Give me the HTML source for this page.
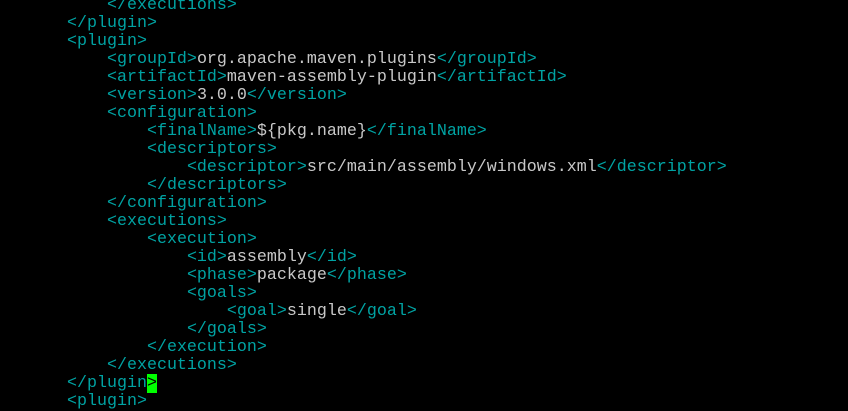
<!DOCTYPE html>
<html><head><meta charset="utf-8"><style>
html,body{margin:0;padding:0;background:#000;width:848px;height:406px;overflow:hidden}
pre{margin:0;position:absolute;left:27px;top:-3px;font-family:"Liberation Mono",monospace;font-size:16.67px;line-height:18px;color:#c8c8c8;letter-spacing:0}
.t{color:#00a3a3}
.c{background:#00ff00;color:#000}
</style></head><body>
<pre>        <span class="t">&lt;/executions&gt;</span>
<span class="t">    &lt;/plugin&gt;</span>
<span class="t">    &lt;plugin&gt;</span>
        <span class="t">&lt;groupId&gt;</span>org.apache.maven.plugins<span class="t">&lt;/groupId&gt;</span>
        <span class="t">&lt;artifactId&gt;</span>maven-assembly-plugin<span class="t">&lt;/artifactId&gt;</span>
        <span class="t">&lt;version&gt;</span>3.0.0<span class="t">&lt;/version&gt;</span>
        <span class="t">&lt;configuration&gt;</span>
            <span class="t">&lt;finalName&gt;</span>${pkg.name}<span class="t">&lt;/finalName&gt;</span>
            <span class="t">&lt;descriptors&gt;</span>
                <span class="t">&lt;descriptor&gt;</span>src/main/assembly/windows.xml<span class="t">&lt;/descriptor&gt;</span>
            <span class="t">&lt;/descriptors&gt;</span>
        <span class="t">&lt;/configuration&gt;</span>
        <span class="t">&lt;executions&gt;</span>
            <span class="t">&lt;execution&gt;</span>
                <span class="t">&lt;id&gt;</span>assembly<span class="t">&lt;/id&gt;</span>
                <span class="t">&lt;phase&gt;</span>package<span class="t">&lt;/phase&gt;</span>
                <span class="t">&lt;goals&gt;</span>
                    <span class="t">&lt;goal&gt;</span>single<span class="t">&lt;/goal&gt;</span>
                <span class="t">&lt;/goals&gt;</span>
            <span class="t">&lt;/execution&gt;</span>
        <span class="t">&lt;/executions&gt;</span>
<span class="t">    &lt;/plugin</span><span class="c">&gt;</span>
<span class="t">    &lt;plugin&gt;</span>
</pre>
</body></html>
